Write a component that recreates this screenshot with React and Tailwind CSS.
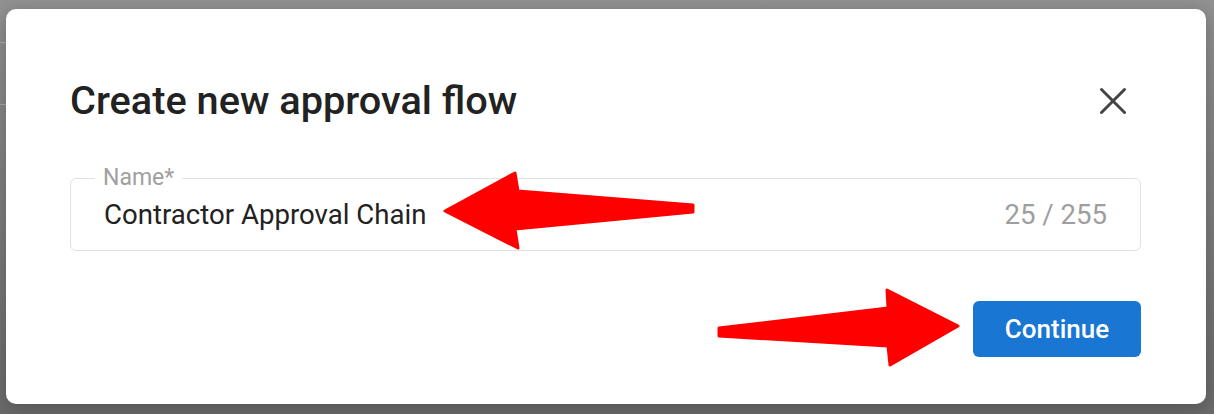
import React from "react";

// Red callout arrows drawn over the dialog
function Arrows() {
  return (
    <svg
      className="pointer-events-none absolute inset-0"
      width="1214"
      height="414"
      viewBox="0 0 1214 414"
    >
      <g fill="#ff0000" stroke="#ff0000" strokeWidth="3" strokeLinejoin="round">
        <polygon points="445,211 515,173 518,191 693,205 693,212 515,229 518,248" />
        <polygon points="958,326 887,290 888,308 719,328 719,336 888,346 890,365" />
      </g>
    </svg>
  );
}

export default function App() {
  return (
    <div
      className="relative h-[414px] w-[1214px] overflow-hidden bg-gradient-to-b from-[#929292] to-[#6b6b6b] pl-[6px] pr-[8px] pt-[9px] pb-[10px]"
      style={{ fontFamily: "Roboto, 'Noto Sans', Arial, sans-serif" }}
    >
      {/* faint page rules behind the overlay */}
      <div className="absolute left-0 top-[42px] h-px w-[6px] bg-[#9c9c9c]" />
      <div className="absolute left-0 top-[104px] h-px w-[6px] bg-[#9a9a9a]" />

      <div className="flex h-full flex-col rounded-[10px] bg-white pl-[64px] pr-[65px] pt-[68px] pb-[47px] shadow-[0_4px_20px_rgba(0,0,0,0.25)]">
        <div className="flex h-[48px] items-center justify-between">
          <h2 className="text-[39.7px] font-medium leading-[48px] text-[#222222]">
            Create new approval flow
          </h2>
          <button className="mr-[13px] flex h-[30px] w-[30px] items-center justify-center text-[#444444]">
            <svg width="28" height="28" viewBox="0 0 28 28">
              <path
                d="M2.5 2.5 L25.5 25.5 M25.5 2.5 L2.5 25.5"
                stroke="currentColor"
                strokeWidth="3"
                strokeLinecap="round"
              />
            </svg>
          </button>
        </div>

        <div className="relative mt-[53px] flex h-[73px] items-center justify-between rounded-[6px] border border-[#e2e2e2] pl-[33px] pr-[33px]">
          <span className="absolute left-[24px] top-[-14px] bg-white px-[8px] text-[23px] leading-[26px] text-[#a0a0a0]">
            Name*
          </span>
          <span className="text-[27.6px] text-[#222222]">Contractor Approval Chain</span>
          <span className="text-[27.6px] text-[#9e9e9e]">25 / 255</span>
        </div>

        <div className="mt-[50px] flex justify-end">
          <button className="h-[56px] w-[168px] rounded-[6px] bg-[#1976d2] text-[26px] font-medium text-white">
            Continue
          </button>
        </div>
      </div>

      <Arrows />
    </div>
  );
}
